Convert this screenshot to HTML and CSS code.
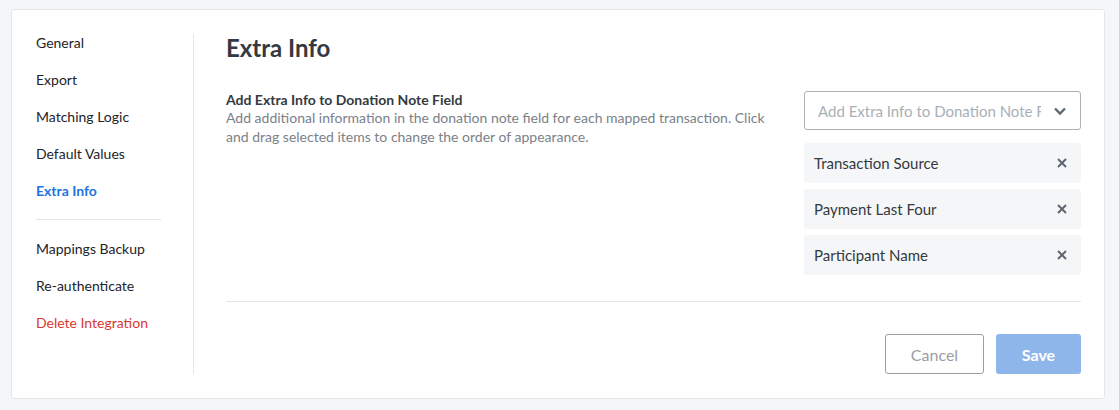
FILE: index.html
```html
<!DOCTYPE html>
<html>
<head>
<meta charset="utf-8">
<link rel="stylesheet" href="styles.css">
</head>
<body>
<div class="card">
  <nav class="sidenav">
    <a class="nav-item">General</a>
    <a class="nav-item">Export</a>
    <a class="nav-item">Matching Logic</a>
    <a class="nav-item">Default Values</a>
    <a class="nav-item active">Extra Info</a>
    <div class="nav-divider"></div>
    <a class="nav-item">Mappings Backup</a>
    <a class="nav-item">Re-authenticate</a>
    <a class="nav-item danger">Delete Integration</a>
  </nav>
  <main class="main">
    <h1 class="title">Extra Info</h1>
    <div class="field-row">
      <div class="field-info">
        <div class="field-label">Add Extra Info to Donation Note Field</div>
        <div class="field-desc">Add additional information in the donation note field for each mapped transaction. Click and drag selected items to change the order of appearance.</div>
      </div>
      <div class="field-control">
        <div class="select">
          <span class="placeholder">Add Extra Info to Donation Note Field</span>
          <svg class="chevron" width="14" height="10" viewBox="0 0 14 10"><path d="M2 2.5 L7 7.5 L12 2.5" fill="none" stroke="#5d6770" stroke-width="2.4"/></svg>
        </div>
        <div class="chip"><span>Transaction Source</span><svg class="x" width="10" height="10" viewBox="0 0 10 10"><path d="M1 1 L9 9 M9 1 L1 9" stroke="#5d6770" stroke-width="2"/></svg></div>
        <div class="chip"><span>Payment Last Four</span><svg class="x" width="10" height="10" viewBox="0 0 10 10"><path d="M1 1 L9 9 M9 1 L1 9" stroke="#5d6770" stroke-width="2"/></svg></div>
        <div class="chip"><span>Participant Name</span><svg class="x" width="10" height="10" viewBox="0 0 10 10"><path d="M1 1 L9 9 M9 1 L1 9" stroke="#5d6770" stroke-width="2"/></svg></div>
      </div>
    </div>
    <div class="hr"></div>
    <div class="actions">
      <button class="btn btn-cancel">Cancel</button>
      <button class="btn btn-save">Save</button>
    </div>
  </main>
</div>
</body>
</html>
```
FILE: styles.css
```css
* { box-sizing: border-box; }
html, body { margin: 0; padding: 0; }
body {
  background: #f5f6f8;
  font-family: "Lato", "Liberation Sans", sans-serif;
  color: #212529;
  padding: 9px 14px 11px 11px;
}
.card {
  background: #fff;
  border: 1px solid #e3e5e8;
  border-radius: 3px;
  height: 390px;
  display: flex;
  padding: 24px 23px 24px 24px;
}
.sidenav {
  width: 158px;
  flex: none;
  border-right: 1px solid #e3e5e8;
  display: flex;
  flex-direction: column;
  gap: 20px;
}
.nav-item {
  font-size: 14px;
  line-height: 17px;
  height: 17px;
  display: flex;
  align-items: center;
  color: #1e2327;
}
.nav-item.active { color: #2273e0; font-weight: 700; }
.nav-item.danger { color: #d93a30; }
.nav-divider {
  width: 125px;
  height: 1px;
  background: #e3e5e8;
}
.main {
  flex: 1;
  padding-left: 32px;
  display: flex;
  flex-direction: column;
}
.title {
  margin: 0;
  font-size: 24px;
  font-weight: 700;
  color: #343a40;
  line-height: 28px;
}
.field-row {
  display: flex;
  justify-content: space-between;
  margin-top: 29px;
}
.field-info { width: 548px; }
.field-label {
  font-size: 14px;
  font-weight: 700;
  color: #343a40;
  line-height: 17px;
}
.field-desc {
  font-size: 14px;
  color: #7b8188;
  line-height: 19px;
}
.field-control { width: 277px; display: flex; flex-direction: column; gap: 6px; }
.select {
  height: 39px;
  border: 1px solid #aab1b8;
  border-radius: 3px;
  display: flex;
  align-items: center;
  padding: 0 13px;
  margin-bottom: 7px;
}
.placeholder {
  flex: 1;
  white-space: nowrap;
  overflow: hidden;
  color: #a8afb6;
  font-size: 15px;
  margin-right: 12px;
}
.chevron { flex: none; }
.chip {
  height: 40px;
  background: #f5f6f8;
  border-radius: 3px;
  display: flex;
  align-items: center;
  justify-content: space-between;
  padding: 0 14px 0 10px;
  font-size: 15px;
  color: #343a40;
}
.hr { height: 1px; background: #e3e5e8; margin-top: 26px; }
.actions {
  display: flex;
  justify-content: flex-end;
  gap: 12px;
  margin-top: 32px;
}
.btn {
  height: 40px;
  font-family: inherit;
  font-size: 16px;
  border-radius: 3px;
}
.btn-cancel {
  width: 99px;
  background: #fff;
  border: 1px solid #9a9ea3;
  color: #9a9ea3;
}
.btn-save {
  width: 85px;
  background: #8fb6ea;
  border: none;
  color: #fff;
  font-weight: 700;
}
```
